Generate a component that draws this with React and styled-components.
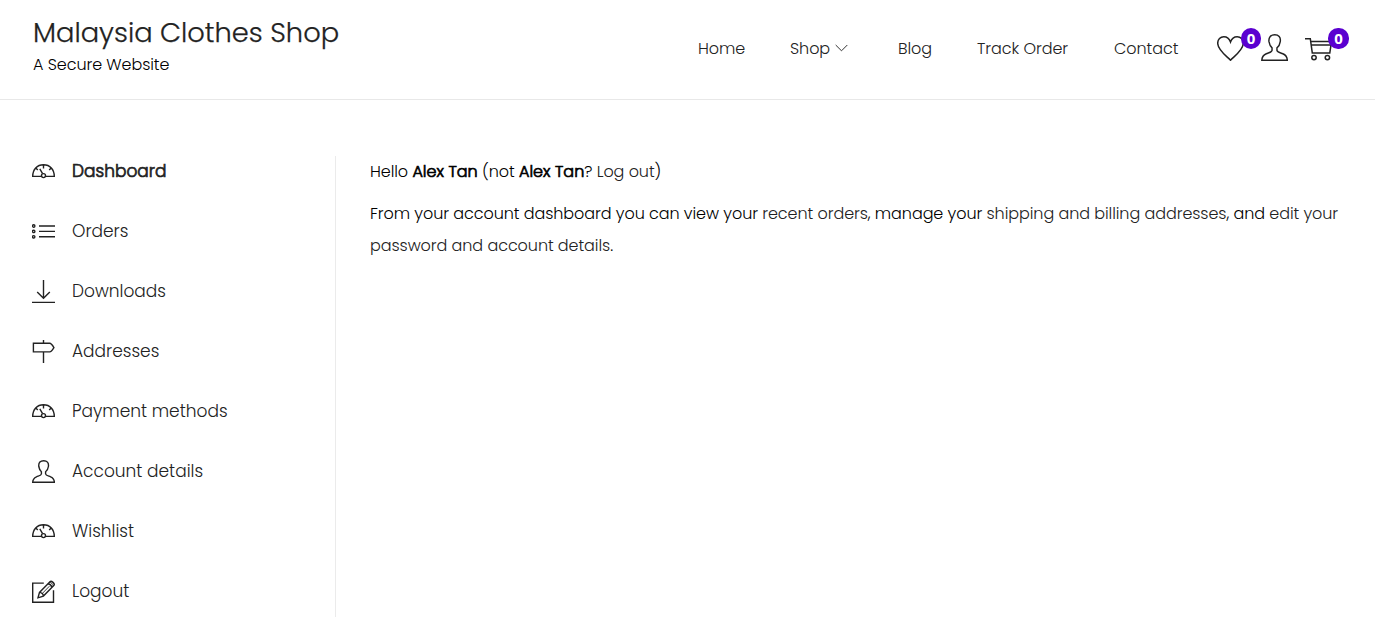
import React from "react";
import styled, { createGlobalStyle } from "styled-components";

const GlobalStyle = createGlobalStyle`
  * { box-sizing: border-box; }
  body {
    margin: 0;
    background: #fff;
    color: #000;
    font-family: Poppins, Inter, "Liberation Sans", sans-serif;
    font-weight: 300;
    overflow: hidden;
  }
`;

const Page = styled.div`
  height: 617px;
  display: flex;
  flex-direction: column;
  overflow: hidden;
`;

const Header = styled.header`
  height: 100px;
  flex: none;
  display: flex;
  justify-content: space-between;
  border-bottom: 1px solid #e8e8e8;
  padding: 0 26px 0 33px;
`;

const Brand = styled.div`
  padding-top: 15px;
  white-space: nowrap;
`;

const Title = styled.h1`
  margin: 0;
  font-size: 27.3px;
  line-height: 36px;
  font-weight: 300;
  color: #222;
  -webkit-text-stroke: 0.25px #222;
`;

const Tagline = styled.p`
  margin: 0;
  font-size: 16px;
  line-height: 28px;
  letter-spacing: -0.07px;
`;

const Actions = styled.div`
  display: flex;
  align-items: flex-start;
`;

const Nav = styled.nav`
  display: flex;
  padding-top: 36px;
`;

const NavLink = styled.a`
  width: ${(p) => p.$width}px;
  display: flex;
  align-items: center;
  height: 24px;
  font-size: 16px;
  letter-spacing: -0.06px;
  color: #222;
  white-space: nowrap;
`;

const Chevron = styled.svg`
  width: 13px;
  height: 8px;
  margin-left: 5px;
`;

const IconButton = styled.a`
  position: relative;
  width: ${(p) => p.$width}px;
  padding-top: 34px;
  height: 61px;
`;

const Badge = styled.span`
  position: absolute;
  top: 28px;
  left: ${(p) => p.$left}px;
  width: ${(p) => p.$width}px;
  height: 21px;
  border-radius: 10px;
  background: #5a00d0;
  color: #fff;
  font: 700 15px/20px "Open Sans", sans-serif;
  text-align: center;
`;

const Body = styled.main`
  flex: 1;
  display: flex;
  padding: 56px 0 0 32px;
`;

const Sidebar = styled.aside`
  width: 304px;
  border-right: 1px solid #ebebeb;
  display: flex;
  flex-direction: column;
  gap: 28px;
`;

const MenuItem = styled.a`
  display: flex;
  align-items: flex-start;
  gap: 17px;
  height: 32px;
  font-size: 17px;
  line-height: 31px;
  color: #222;
  white-space: nowrap;
  -webkit-text-stroke: ${(p) => (p.$active ? "0.7px #222" : "0")};
`;

const Icon = styled.svg`
  display: block;
  flex: none;
  width: ${(p) => p.$size || 23}px;
  height: ${(p) => p.$size || 23}px;
  margin-top: ${(p) => (p.$size ? 0 : 4)}px;
  fill: none;
  stroke: #222;
  stroke-width: ${(p) => p.$stroke || 1.4};
`;

const Content = styled.section`
  padding-left: 34px;
  font-size: 16px;
  line-height: 32px;
  letter-spacing: -0.07px;
  white-space: nowrap;
`;

const Paragraph = styled.p`
  margin: 0 0 10px;
`;

const Line = styled.span`
  display: block;
`;

const Link = styled.a`
  color: #222;
`;

const Name = styled.strong`
  font-weight: 300;
  letter-spacing: 0.04px;
  -webkit-text-stroke: 0.7px #000;
`;

const glyphs = {
  gauge: (
    <>
      <path d="M9.3 16.4H.7C.7 9.4 5 4.7 11.5 4.7S22.3 9.4 22.3 16.4h-8.6M11.5 4.7v3.8M3.8 8l2 2M19.2 8l-2 2M7.8 8.8l2.8 4.8" />
      <circle cx="11.5" cy="15.6" r="2" />
    </>
  ),
  list: (
    <>
      <path d="M7 6h16M7 11.4h16M7 16.8h16" />
      <circle cx="1.7" cy="6" r="1.2" />
      <circle cx="1.7" cy="11.4" r="1.2" />
      <circle cx="1.7" cy="16.8" r="1.2" />
    </>
  ),
  download: <path d="M11.5 0v18M5.2 12l6.3 6.3 6.3-6.3M0 22.4h23" />,
  sign: <path d="M11.5 0v3.3M11.5 11.9V23M1.4 3.3h16.3c1.3 0 2 .6 4.2 4.3-2.2 3.7-2.9 4.3-4.2 4.3H1.4z" />,
  person: (
    <path d="M9.4 14v-2.2C7.8 10.5 7.2 8.7 6.8 6.5 6.3 2.5 8.5.7 11.7.7s5.3 1.8 4.7 5.8c-.3 2.2-1 4-2.8 5.3V14c.3 1.7 2.8 1.9 5 2.8 2.7 1.1 3.7 2.8 3.8 5.5H.7c.1-2.7 1.2-4.4 3.8-5.5 2.2-.9 4.6-1.1 4.9-2.8z" />
  ),
  edit: (
    <>
      <path d="M11.8 3.1H.7v19.2h20.8V10.2" />
      <path d="M6 17.8l1.5-5.4L18.2 1.5c1.2-1.2 5 2.3 3.8 3.7L11.4 16.1zM7.5 12.4c2 .2 3.7 1.6 3.9 3.7M15.9 3.8c2 .2 3.6 1.7 3.9 3.6" />
      <path strokeWidth="0.9" d="M17.4 2.3c2 .2 3.6 1.7 3.9 3.6M9.8 14l7.6-7.8" />
    </>
  ),
};

const items = [
  { icon: "gauge", label: "Dashboard", active: true },
  { icon: "list", label: "Orders" },
  { icon: "download", label: "Downloads" },
  { icon: "sign", label: "Addresses" },
  { icon: "gauge", label: "Payment methods" },
  { icon: "person", label: "Account details" },
  { icon: "gauge", label: "Wishlist" },
  { icon: "edit", label: "Logout" },
];

const links = [
  { label: "Home", width: 92 },
  { label: "Shop", width: 108, menu: true },
  { label: "Blog", width: 79 },
  { label: "Track Order", width: 137 },
  { label: "Contact", width: 103 },
];

export default function App() {
  return (
    <>
      <GlobalStyle />
      <Page>
        <Header>
          <Brand>
            <Title>Malaysia Clothes Shop</Title>
            <Tagline>A Secure Website</Tagline>
          </Brand>
          <Actions>
            <Nav>
              {links.map((l) => (
                <NavLink key={l.label} $width={l.width}>
                  {l.label}
                  {l.menu && (
                    <Chevron viewBox="0 0 13 8" fill="none" stroke="#333">
                      <path d="M.7 1l5.8 5.8L12.3 1" />
                    </Chevron>
                  )}
                </NavLink>
              ))}
            </Nav>
            <IconButton $width={44}>
              <Icon $size={27} $stroke={1.5} viewBox="0 0 27 27">
                <path d="M13.5 26.2C9.5 22 .7 16 .7 9.2.7 5.3 3.4 2.7 6.8 2.7c3.2 0 5.5 1.8 6.7 5.2 1.2-3.4 3.5-5.2 6.7-5.2 3.4 0 6.1 2.6 6.1 6.5 0 6.8-8.8 12.8-12.8 17z" />
              </Icon>
              <Badge $left={24} $width={20}>0</Badge>
            </IconButton>
            <IconButton $width={44}>
              <Icon $size={27} $stroke={1.25} viewBox="0 0 23 23">{glyphs.person}</Icon>
            </IconButton>
            <IconButton $width={44}>
              <Icon $size={27} $stroke={1.5} viewBox="0 0 27 27">
                <path d="M0 4.7h5.3l2 14.2h17.5L26.5 7.6H5.7M6.1 10.9h20" />
                <circle cx="9" cy="23.6" r="2.2" />
                <circle cx="22.4" cy="23.6" r="2.2" />
              </Icon>
              <Badge $left={23} $width={21}>0</Badge>
            </IconButton>
          </Actions>
        </Header>
        <Body>
          <Sidebar>
            {items.map((it) => (
              <MenuItem key={it.label} $active={it.active}>
                <Icon viewBox="0 0 23 23">{glyphs[it.icon]}</Icon>
                {it.label}
              </MenuItem>
            ))}
          </Sidebar>
          <Content>
            <Paragraph>
              <Line>
                Hello <Name>Alex Tan</Name> (not <Name>Alex Tan</Name>? <Link>Log out</Link>)
              </Line>
            </Paragraph>
            <Paragraph>
              <Line>
                From your account dashboard you can view your <Link>recent orders</Link>, manage your{" "}
                <Link>shipping and billing addresses</Link>, and <Link>edit your</Link>
              </Line>
              <Line>
                <Link>password and account details</Link>.
              </Line>
            </Paragraph>
          </Content>
        </Body>
      </Page>
    </>
  );
}
